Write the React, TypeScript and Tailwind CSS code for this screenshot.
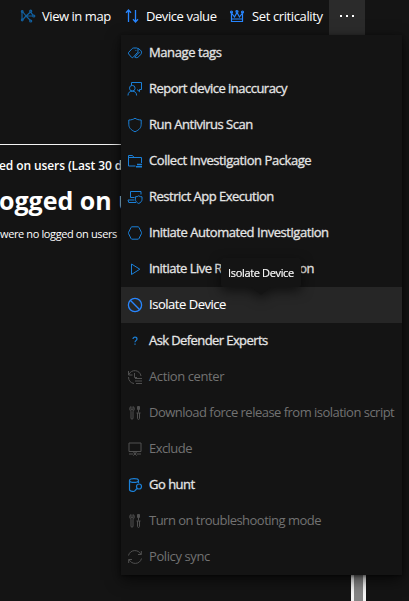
import React from "react";

type IconName =
  | "map" | "sort" | "crown" | "tags" | "feedback" | "shield" | "folder" | "restrict" | "hexagon"
  | "play" | "block" | "question" | "history" | "tools" | "monitor" | "hunt" | "sync";

const shapes: Record<IconName, React.ReactNode> = {
  map: (
    <g strokeWidth="1.2">
      <path d="M2 3.500v8.500M2.500 3.500 6 8 2.500 12M6 8h7M6 8l4.500-4M6 8l4.500 4.500M10.500 4l2.700 3.300" />
      <circle cx="2.200" cy="3.500" r=".8" /><circle cx="2.200" cy="12" r=".8" /><circle cx="10.700" cy="3.200" r="1" />
      <circle cx="10.700" cy="13" r="1" /><circle cx="13.800" cy="8" r="1" />
    </g>
  ),
  sort: <path strokeWidth="1.3" d="M4.500 14V2M2 4.700 4.500 2 7 4.700M11.500 2v12M9 11.300l2.500 2.700 2.500-2.700" />,
  crown: (
    <path strokeWidth="1.2" d="M2.500 13.500V5l3 4L8 4.500 10.500 9l3-4v8.500zM2.500 11h11M2.500 5a1 1 0 1 1 0-2 1 1 0 0 1 0 2zM8 4.500a1 1 0 1 1 0-2 1 1 0 0 1 0 2zM13.500 5a1 1 0 1 1 0-2 1 1 0 0 1 0 2z" />
  ),
  tags: (
    <path d="M1.700 7.300 5.200 3.600c.4-.4.800-.6 1.300-.6h3.300c.7 0 1.200.5 1.200 1.200v2c0 .5-.2.900-.5 1.300L6.200 12.300c-.5.5-1.200.5-1.700 0L1.700 9c-.4-.5-.4-1.200 0-1.700zM11 3.300l2.500 1.900c1.300 1 1.400 2.900.3 4.200l-2.100 2.300c-1 1.100-2.700 1.300-4 .5L12.500 7M8.500 5.500h.8" />
  ),
  feedback: (
    <>
      <path d="M4.500 4.500V1.500h10v7h-2v2.200L10 8.500M1 14.500c0-3 1.800-4.300 4.300-4.300s4.300 1.300 4.300 4.300" />
      <circle cx="5.300" cy="7.200" r="2.800" />
    </>
  ),
  shield: <path d="M8 1.200c1.700 1.200 3.700 1.800 6.200 1.800v4.300c0 3.400-2 5.600-6.200 7.500C3.800 12.900 1.800 10.700 1.800 7.300V3C4.300 3 6.300 2.400 8 1.200z" />,
  folder: (
    <>
      <path d="M8.500 13H1.500V2.500h4L7 4.500h7.500V10M1.500 4.500h5.500" />
      <path strokeWidth="1.500" d="M10 11.500h5M9 13.700h6" />
    </>
  ),
  restrict: (
    <path d="M7.500 8.500h-4v-6h10.500v3M1 11h6.500M1 11l.8 2.500H9M11.700 6.800c1 .8 2 1 3.300 1v2.500c0 2-1.200 3.200-3.300 4.200-2.100-1-3.300-2.200-3.300-4.200V7.800c1.300 0 2.300-.2 3.300-1z" />
  ),
  hexagon: <path d="M5 1.800h6c.4 0 .7.200.9.500l2.600 5.200c.2.300.2.700 0 1l-2.600 5.200c-.2.300-.5.500-.9.500H5c-.4 0-.7-.2-.9-.5L1.500 8.500c-.2-.3-.2-.7 0-1l2.600-5.200c.2-.3.500-.5.900-.5z" />,
  play: <path d="M4.500 3v10.500L12.800 8.200z" />,
  block: (
    <>
      <circle cx="8" cy="8" r="6.600" strokeWidth="1.300" />
      <path strokeWidth="1.300" d="m3.300 3.300 9.400 9.400" />
    </>
  ),
  question: <path strokeWidth="1.200" d="M6 6c0-2.500 4-2.500 4 0 0 1.300-2 1.500-2 3.300M8 10.500v1.200" />,
  history: <path d="M1.500 2v4h4M2 5.500C4-.2 13 .5 14 7M1.500 8c0 3.500 2 6 5.500 6.500M7.500 4v4.500H10M8 9.500h7M8 12h7M9 14.500h6" />,
  tools: (
    <path d="M4 1.500v3.300h2V1.500c1.500.8 2 3.500 0 4.700V13c0 1.700-2 1.700-2 0V6.200c-2-1.200-1.500-3.900 0-4.700zM11.500 1.500v6M10.500 1.500h2v3h-2zM9.500 8h4M10.500 8v5.500c0 1.200 2 1.200 2 0V8" />
  ),
  monitor: <path d="M2 2h12v8.500H2zM8 10.500V12M2 13h4M10 13h4M6.200 11.500l3.600 3M9.800 11.500l-3.600 3" />,
  hunt: (
    <>
      <path strokeWidth="1.200" d="M2.500 3.500v9c0 1.200 2 2 5 2M2.500 3.500c0-2.500 9-2.500 9 0s-9 2.500-9 0zM11.500 3.500V6M10 11.500 7.500 14.200" />
      <circle cx="12" cy="9.500" r="2.500" strokeWidth="1.200" />
    </>
  ),
  sync: <path d="M1.500 6.500C3 .3 11.500 0 14 5.500M14.300 2V5.500H11M14.500 9.500c-1.500 6.200-10 6.500-12.500 1M1.700 14v-3.500H5" />,
};

function Icon({ name, className }: { name: IconName; className: string }) {
  return (
    <svg viewBox="0 0 16 16" fill="none" stroke="currentColor" strokeWidth="1" className={`size-4 shrink-0 ${className}`}>
      {shapes[name]}
    </svg>
  );
}

type Item = { icon: IconName; label: string; track: string; off?: boolean; active?: boolean };

const items: Item[] = [
  { icon: "tags", label: "Manage tags", track: "tracking-[-0.4px]" },
  { icon: "feedback", label: "Report device inaccuracy", track: "tracking-[-0.52px]" },
  { icon: "shield", label: "Run Antivirus Scan", track: "tracking-[-0.5px]" },
  { icon: "folder", label: "Collect Investigation Package", track: "tracking-[-0.43px]" },
  { icon: "restrict", label: "Restrict App Execution", track: "tracking-[-0.5px]" },
  { icon: "hexagon", label: "Initiate Automated Investigation", track: "tracking-[-0.45px]" },
  { icon: "play", label: "Initiate Live Response Session", track: "tracking-[-0.52px]" },
  { icon: "block", label: "Isolate Device", track: "tracking-[-0.47px]", active: true },
  { icon: "question", label: "Ask Defender Experts", track: "tracking-[-0.59px]" },
  { icon: "history", label: "Action center", track: "tracking-[-0.4px]", off: true },
  { icon: "tools", label: "Download force release from isolation script", track: "tracking-[-0.52px]", off: true },
  { icon: "monitor", label: "Exclude", track: "tracking-[-0.55px]", off: true },
  { icon: "hunt", label: "Go hunt", track: "tracking-[-0.5px]" },
  { icon: "tools", label: "Turn on troubleshooting mode", track: "tracking-[-0.52px]", off: true },
  { icon: "sync", label: "Policy sync", track: "tracking-[-0.4px]", off: true },
];

function MenuRow({ icon, label, track, off, active }: Item) {
  return (
    <li className={`flex h-9 items-center pl-1.5 ${active ? "bg-[#262626] text-white" : off ? "text-[#727272]" : "text-[#e5e5e5]"}`}>
      <Icon name={icon} className={off ? "text-[#505050]" : active ? "text-[#2886ff]" : "text-[#1b80d8]"} />
      <span className={`ml-1.5 pb-0.5 whitespace-nowrap text-[13px] leading-5 ${track} ${off ? "" : active ? "[-webkit-text-stroke:0.1px]" : "[-webkit-text-stroke:0.3px]"}`}>{label}</span>
    </li>
  );
}

export default function App() {
  return (
    <div className="relative h-[601px] w-[409px] overflow-hidden bg-[#141414] font-['Open_Sans','Noto_Sans',sans-serif] text-white">
      <header className="flex h-[35px] items-center pb-[3px] text-[13px]">
        <Icon name="map" className="ml-5 text-[#12609f]" />
        <span className="ml-1.5 w-[82px] pt-0.5 whitespace-nowrap tracking-[-0.45px]">View in map</span>
        <Icon name="sort" className="text-[#2886ff]" />
        <span className="ml-1.5 w-[83px] pt-0.5 whitespace-nowrap tracking-[-0.43px]">Device value</span>
        <Icon name="crown" className="text-[#2886ff]" />
        <span className="ml-[7px] w-[77px] pt-0.5 whitespace-nowrap tracking-[-0.38px]">Set criticality</span>
        <div className="mb-[-3px] flex h-[35px] w-9 items-center justify-center gap-[4px] bg-[#2b2b2b] pb-1">
          <i className="size-[2px] bg-white" />
          <i className="size-[2px] bg-white" />
          <i className="size-[2px] bg-white" />
        </div>
      </header>

      <main className="mt-[109px] w-[130px] overflow-hidden border-t border-[#f4f4f4] whitespace-nowrap">
        <h3 className="mt-[11px] ml-[-1px] text-[12px] leading-5 font-semibold tracking-[-0.1px]">ed on users (Last 30 days)</h3>
        <h2 className="mt-2 ml-[-1px] text-[25px] leading-8 font-bold">ogged on users</h2>
        <p className="mt-2 text-[11px] leading-5 tracking-[-0.38px]">were no logged on users</p>
      </main>

      <div className="absolute top-[560px] left-[351px] h-[41px] w-[15px] border-x-[3px] border-[#f5f5f5] bg-[#858585]" />

      <ul className="absolute top-[35px] left-[121px] h-[540px] w-[281px] bg-[#141414] shadow-[0_5px_14px_rgba(0,0,0,0.6),0_1px_3px_rgba(0,0,0,0.5)]">
        {items.map((item) => (
          <MenuRow key={item.label} {...item} />
        ))}
      </ul>

      <div className="absolute top-[258px] left-[221px] h-[29px] w-20 drop-shadow-[0_4px_6px_rgba(0,0,0,0.6)]">
        <div className="absolute bottom-[-8px] left-[30px] h-2 w-5 bg-[#141414] [clip-path:polygon(0_0,100%_0,50%_100%)]" />
        <div className="flex h-full items-center justify-center rounded-[2px] bg-[#141414] pt-px text-[11px] whitespace-nowrap tracking-[-0.35px] [-webkit-text-stroke:0.15px]">Isolate Device</div>
      </div>
    </div>
  );
}
